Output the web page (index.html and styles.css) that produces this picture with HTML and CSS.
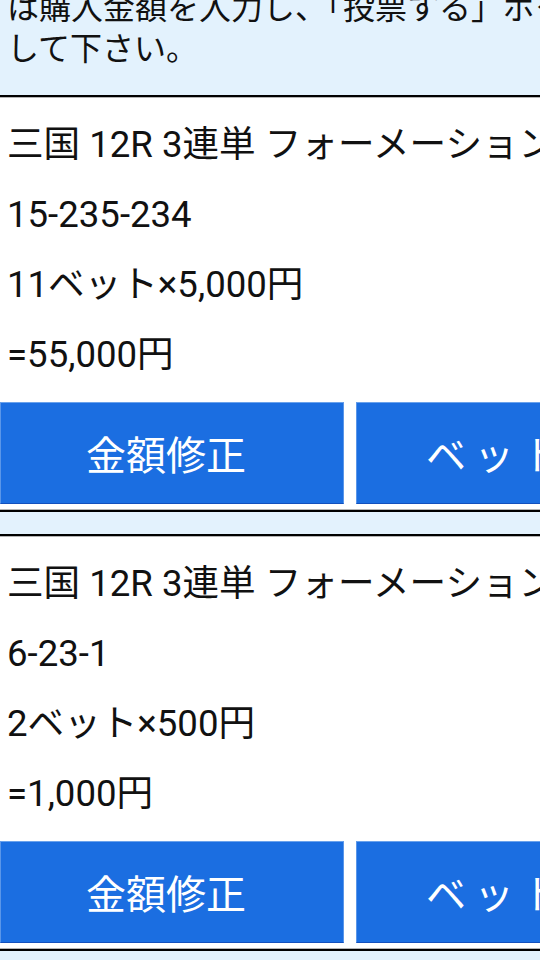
FILE: index.html
```html
<!DOCTYPE html>
<html lang="ja">
<head>
<meta charset="utf-8">
<title>投票確認</title>
<link rel="stylesheet" href="styles.css">
</head>
<body>
<div class="page">
  <div class="notice">は購入金額を入力し、「投票する」ボタンを押<br>して下さい。</div>

  <div class="card">
    <div class="line">三国 12R 3連単 フォーメーション</div>
    <div class="line">15-235-234</div>
    <div class="line">11ベット×5,000円</div>
    <div class="line">=55,000円</div>
    <div class="buttons">
      <button class="btn btn-edit">金額修正</button>
      <button class="btn btn-delete">ベット削除</button>
    </div>
  </div>

  <div class="card">
    <div class="line">三国 12R 3連単 フォーメーション</div>
    <div class="line">6-23-1</div>
    <div class="line">2ベット×500円</div>
    <div class="line">=1,000円</div>
    <div class="buttons">
      <button class="btn btn-edit">金額修正</button>
      <button class="btn btn-delete">ベット削除</button>
    </div>
  </div>
</div>
</body>
</html>
```

FILE: styles.css
```css
html {
  overflow: hidden;
}

body {
  margin: 0;
  background: #e3f2fd;
  color: #111;
  font-family: Roboto, "Noto Sans CJK JP", sans-serif;
}

.page {
  width: 780px;
}

.notice {
  margin-top: -12px;
  padding: 0 7px 25px 7px;
  font-size: 32px;
  line-height: 41px;
  white-space: nowrap;
}

.card {
  background: #fff;
  border-top: 2px solid #000;
  border-bottom: 2px solid #000;
  box-shadow: inset 0 1px 0 #b4b4b4, inset 0 -1px 0 #b4b4b4;
  padding: 13px 0 6px 0;
  margin-bottom: 22px;
}

.line {
  padding: 0 7px;
  font-size: 36.6px;
  line-height: 70px;
  height: 70px;
  white-space: nowrap;
}

.buttons {
  display: flex;
  gap: 12px;
  margin-top: 12px;
}

.btn {
  flex: 0 0 344px;
  height: 102px;
  margin: 0;
  padding: 0;
  background: #1b6ee1;
  color: #fff;
  font-family: Roboto, "Noto Sans CJK JP", sans-serif;
  font-size: 40px;
  border: 1px solid;
  border-color: #6aa2ec #5a96e9 #1250bd #5a96e9;
  white-space: nowrap;
  text-align: center;
}

.btn-edit {
  padding-right: 12px;
}

.btn-delete {
  padding-left: 36px;
  letter-spacing: 8px;
}
```
